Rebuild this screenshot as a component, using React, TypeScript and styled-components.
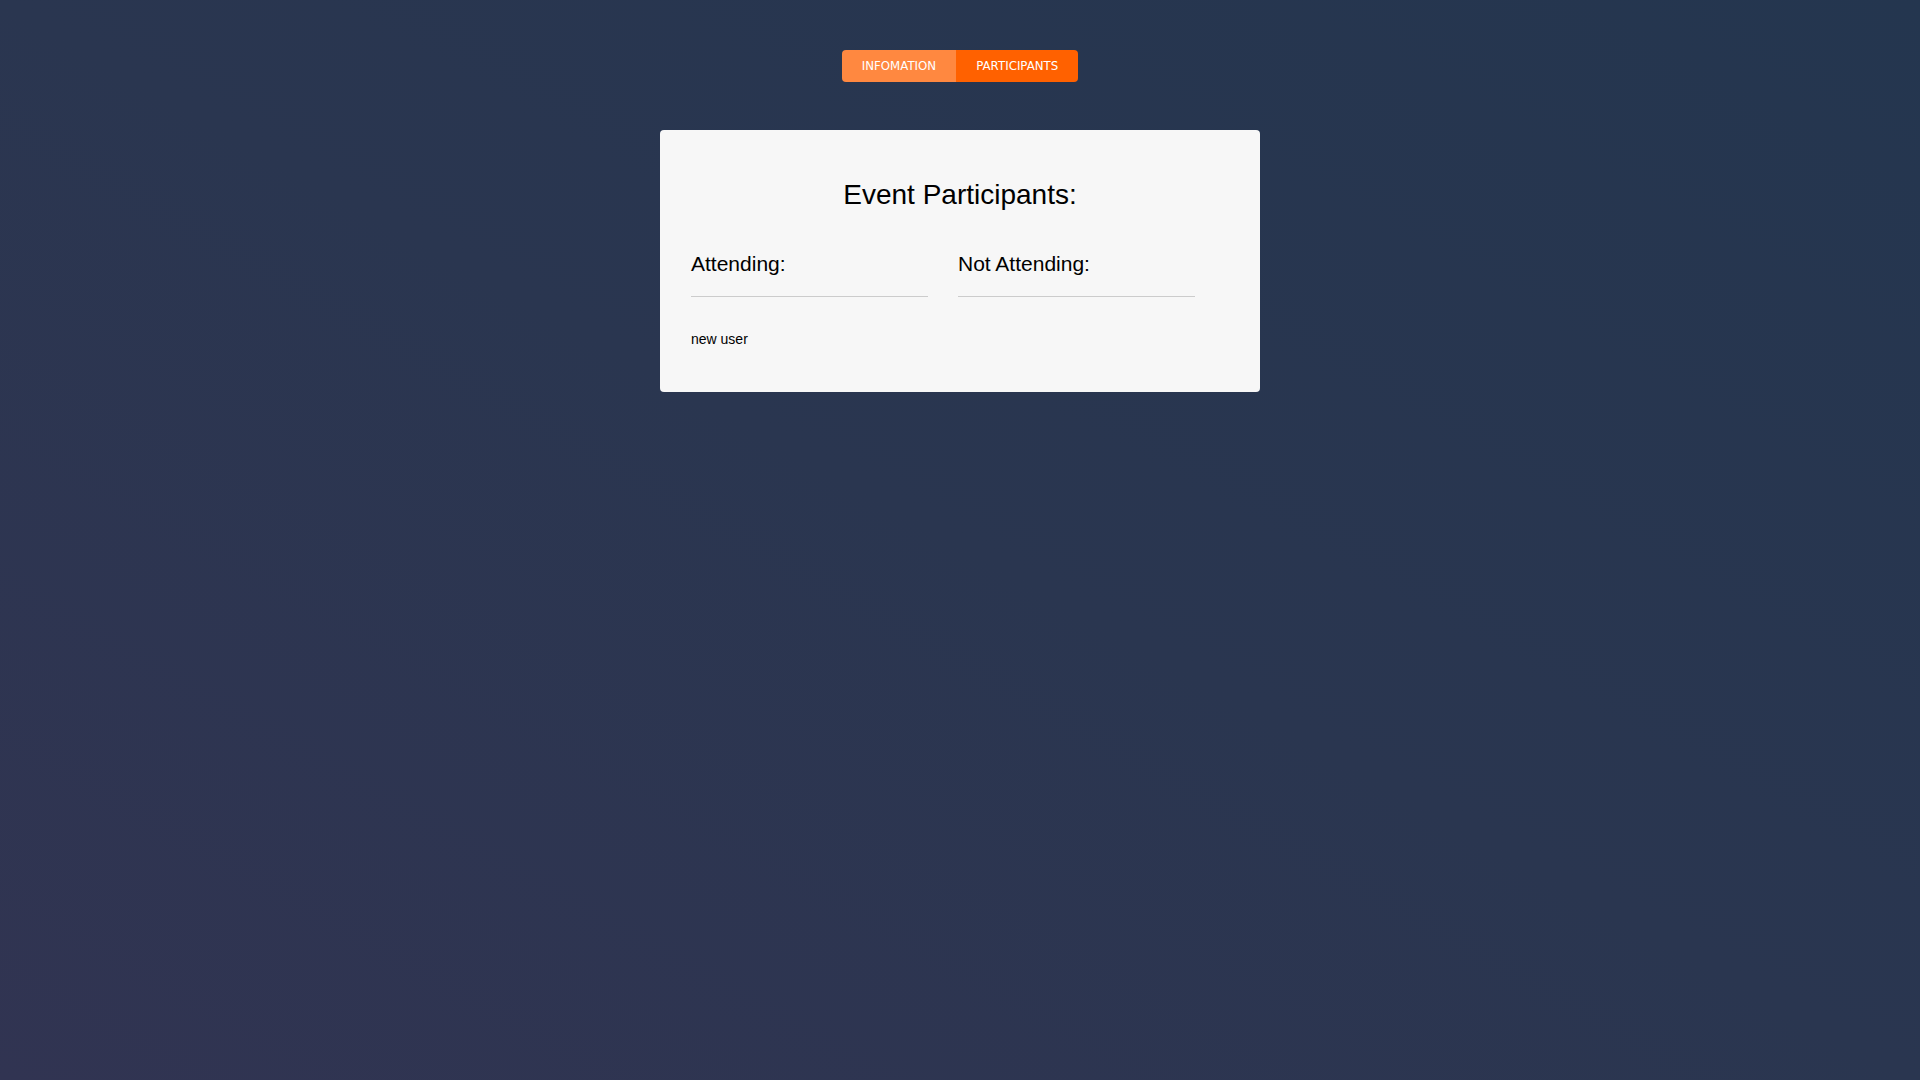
import React from "react";
import styled, { createGlobalStyle } from "styled-components";

const GlobalStyle = createGlobalStyle`
  html, body {
    margin: 0;
    padding: 0;
  }
  body {
    min-height: 100vh;
    background: linear-gradient(to top right, #313452 0%, #2a3650 50%, #24364f 100%);
    font-family: "Liberation Sans", Arial, sans-serif;
  }
`;

const Page = styled.div`
  min-height: 100vh;
  display: flex;
  flex-direction: column;
  align-items: center;
  padding-top: 50px;
  box-sizing: border-box;
`;

const Tabs = styled.div`
  display: flex;
  border-radius: 4px;
  overflow: hidden;
`;

const Tab = styled.button<{ $active?: boolean }>`
  height: 32px;
  padding: 0 20px;
  border: none;
  margin: 0;
  background: ${(p) => (p.$active ? "#ff6100" : "#ff8840")};
  color: #ffffff;
  font-family: "DejaVu Sans", Verdana, sans-serif;
  font-size: 11.8px;
  text-transform: uppercase;
  cursor: pointer;
`;

const Card = styled.section`
  width: 600px;
  box-sizing: border-box;
  margin-top: 48px;
  padding: 49px 31px 45px;
  background: #f7f7f7;
  border-radius: 4px;
`;

const Title = styled.h2`
  margin: 0;
  font-size: 28px;
  font-weight: 400;
  text-align: center;
  color: #000;
`;

const Columns = styled.div`
  display: grid;
  grid-template-columns: 237px 237px;
  column-gap: 30px;
  margin-top: 41px;
`;

const Column = styled.div`
  display: flex;
  flex-direction: column;
`;

const ColumnTitle = styled.h3`
  margin: 0;
  font-size: 21px;
  font-weight: 400;
  color: #000;
`;

const Divider = styled.div`
  margin-top: 20px;
  border-top: 1px solid #cccccc;
`;

const NameList = styled.ul`
  list-style: none;
  margin: 34px 0 0;
  padding: 0;
  min-height: 16px;
`;

const Name = styled.li`
  font-size: 14px;
  color: #000;
`;

export default function App() {
  const attending = ["new user"];
  const notAttending: string[] = [];
  return (
    <>
      <GlobalStyle />
      <Page>
        <Tabs>
          <Tab>Infomation</Tab>
          <Tab $active>Participants</Tab>
        </Tabs>
        <Card>
          <Title>Event Participants:</Title>
          <Columns>
            <Column>
              <ColumnTitle>Attending:</ColumnTitle>
              <Divider />
              <NameList>
                {attending.map((n) => (
                  <Name key={n}>{n}</Name>
                ))}
              </NameList>
            </Column>
            <Column>
              <ColumnTitle>Not Attending:</ColumnTitle>
              <Divider />
              <NameList>
                {notAttending.map((n) => (
                  <Name key={n}>{n}</Name>
                ))}
              </NameList>
            </Column>
          </Columns>
        </Card>
      </Page>
    </>
  );
}
